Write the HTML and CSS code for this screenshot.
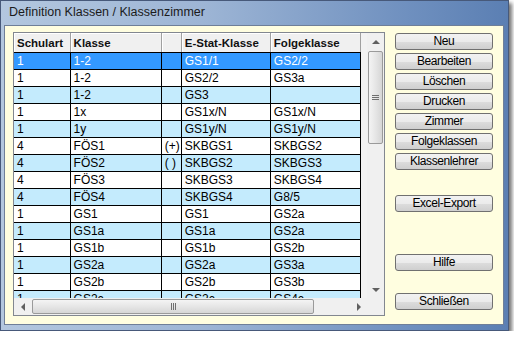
FILE: index.html
```html
<!DOCTYPE html>
<html lang="de">
<head>
  <meta charset="UTF-8" />
  <title>Definition Klassen / Klassenzimmer</title>
  <link rel="stylesheet" href="styles.css">
</head>
<body>
  <div class="window">
    <div class="titlebar">Definition Klassen / Klassenzimmer</div>
    <div class="client">

      <!-- Klassen grid -->
      <div class="grid">
        <div class="grid-body">
          <div class="table-wrap">
            <table class="classes">
              <colgroup>
                <col class="c-art"><col class="c-klasse"><col class="c-flag"><col class="c-estat"><col class="c-folge">
              </colgroup>
              <thead>
                <tr><th>Schulart</th><th>Klasse</th><th></th><th>E-Stat-Klasse</th><th>Folgeklasse</th></tr>
              </thead>
              <tbody>
                <tr class="selected"><td>1</td><td>1-2</td><td></td><td>GS1/1</td><td>GS2/2</td></tr>
                <tr><td>1</td><td>1-2</td><td></td><td>GS2/2</td><td>GS3a</td></tr>
                <tr class="alt"><td>1</td><td>1-2</td><td></td><td>GS3</td><td></td></tr>
                <tr><td>1</td><td>1x</td><td></td><td>GS1x/N</td><td>GS1x/N</td></tr>
                <tr class="alt"><td>1</td><td>1y</td><td></td><td>GS1y/N</td><td>GS1y/N</td></tr>
                <tr><td>4</td><td>FÖS1</td><td>(+)</td><td>SKBGS1</td><td>SKBGS2</td></tr>
                <tr class="alt"><td>4</td><td>FÖS2</td><td>( )</td><td>SKBGS2</td><td>SKBGS3</td></tr>
                <tr><td>4</td><td>FÖS3</td><td></td><td>SKBGS3</td><td>SKBGS4</td></tr>
                <tr class="alt"><td>4</td><td>FÖS4</td><td></td><td>SKBGS4</td><td>G8/5</td></tr>
                <tr><td>1</td><td>GS1</td><td></td><td>GS1</td><td>GS2a</td></tr>
                <tr class="alt"><td>1</td><td>GS1a</td><td></td><td>GS1a</td><td>GS2a</td></tr>
                <tr><td>1</td><td>GS1b</td><td></td><td>GS1b</td><td>GS2b</td></tr>
                <tr class="alt"><td>1</td><td>GS2a</td><td></td><td>GS2a</td><td>GS3a</td></tr>
                <tr><td>1</td><td>GS2b</td><td></td><td>GS2b</td><td>GS3b</td></tr>
                <tr class="alt"><td>1</td><td>GS2c</td><td></td><td>GS2c</td><td>GS4c</td></tr>
              </tbody>
            </table>
          </div>
          <div class="vscroll">
            <div class="arrow-btn"><span class="tri tri-up"></span></div>
            <div class="vthumb"><span class="grip-h"></span></div>
            <div class="vtrack"></div>
            <div class="arrow-btn"><span class="tri tri-down"></span></div>
          </div>
        </div>
        <div class="hscroll-row">
          <div class="hscroll">
            <div class="arrow-btn"><span class="tri tri-left"></span></div>
            <div class="hthumb"><span class="grip-v"></span></div>
            <div class="htrack"></div>
            <div class="arrow-btn"><span class="tri tri-right"></span></div>
          </div>
          <div class="corner"></div>
        </div>
      </div>

      <!-- Buttons -->
      <div class="buttons">
        <button>Neu</button>
        <button>Bearbeiten</button>
        <button>Löschen</button>
        <button>Drucken</button>
        <button>Zimmer</button>
        <button>Folgeklassen</button>
        <button>Klassenlehrer</button>
        <button class="btn-export">Excel-Export</button>
        <button class="btn-help">Hilfe</button>
        <button class="btn-close">Schließen</button>
      </div>
    </div>
  </div>
</body>
</html>
```

FILE: styles.css
```css
body {
  margin: 0;
  background: #fff;
  font-family: "Liberation Sans", Arial, sans-serif;
}
.window {
  width: 509px;
  height: 331px;
  box-sizing: border-box;
  padding: 0 4px 5px 3px;
  background: linear-gradient(to right, #b3c7df 0%, #9db5d5 40%, #6f90bf 80%, #5b7fb3 100%);
  border: 1px solid #47597a;
  box-shadow: 3px 3px 4px rgba(0, 0, 0, 0.55);
  display: flex;
  flex-direction: column;
}
.titlebar {
  height: 24px;
  line-height: 22px;
  padding-left: 5px;
  font-size: 12.5px;
  color: #1b1b1b;
}
.client {
  flex: 1;
  display: flex;
  background: #fffee0;
  border: 1px solid #6f7f98;
  padding: 6px 0 0 8px;
}
/* grid */
.grid {
  width: 370px;
  height: 282px;
  border: 1px solid #828790;
  background: #f2f2f2;
  display: flex;
  flex-direction: column;
}
.grid-body {
  flex: 1;
  display: flex;
  overflow: hidden;
}
.table-wrap {
  width: 354px;
  overflow: hidden;
}
.classes {
  border-collapse: collapse;
  table-layout: fixed;
  width: 347px;
  font-size: 12px;
}
.c-art { width: 56px; }
.c-klasse { width: 91px; }
.c-flag { width: 20px; }
.c-estat { width: 89px; }
.c-folge { width: 90px; }
.classes th {
  height: 19px;
  padding: 0 3px;
  text-align: left;
  font-size: 11.5px;
  font-weight: bold;
  color: #111;
  background: #f0f0f0;
  border-right: 1px solid #a0a0a0;
  border-bottom: 1px solid #000;
  box-shadow: inset 1px 1px 0 #fff;
  white-space: nowrap;
}
.classes td {
  height: 16px;
  padding: 0 3px;
  line-height: 16px;
  border: 1px solid #000;
  background: #fff;
  color: #000;
  white-space: nowrap;
  overflow: hidden;
}
.classes tr td:first-child {
  border-left: none;
}
.classes tr.alt td {
  background: #c4ebfd;
}
.classes tr.selected td {
  background: #3399ff;
  color: #fff;
}
/* scrollbars */
.vscroll {
  width: 17px;
  margin-left: auto;
  display: flex;
  flex-direction: column;
  background: #f0f0f0;
}
.arrow-btn {
  width: 17px;
  height: 17px;
  display: flex;
  align-items: center;
  justify-content: center;
  flex: none;
}
.tri {
  width: 0;
  height: 0;
  border: 4px solid transparent;
}
.tri-up { border-bottom-color: #606060; border-top-width: 0; }
.tri-down { border-top-color: #606060; border-bottom-width: 0; }
.tri-left { border-right-color: #606060; border-left-width: 0; }
.tri-right { border-left-color: #606060; border-right-width: 0; }
.vthumb {
  height: 93px;
  margin: 1px 1px 0 1px;
  box-sizing: border-box;
  border: 1px solid #9a9a9a;
  border-radius: 2px;
  background: linear-gradient(to right, #f4f4f4, #e6e6e6 50%, #d6d6d6);
  display: flex;
  align-items: center;
  justify-content: center;
}
.vtrack { flex: 1; }
.grip-h {
  width: 7px;
  height: 5px;
  background: repeating-linear-gradient(to bottom, #707070 0 1px, transparent 1px 2px);
}
.hscroll-row {
  height: 17px;
  display: flex;
}
.hscroll {
  flex: 1;
  display: flex;
  background: #f0f0f0;
}
.hthumb {
  width: 282px;
  margin: 1px 0 1px 1px;
  box-sizing: border-box;
  border: 1px solid #9a9a9a;
  border-radius: 2px;
  background: linear-gradient(to bottom, #f4f4f4, #e6e6e6 50%, #d6d6d6);
  display: flex;
  align-items: center;
  justify-content: center;
}
.htrack { flex: 1; }
.grip-v {
  width: 5px;
  height: 7px;
  background: repeating-linear-gradient(to right, #707070 0 1px, transparent 1px 2px);
}
.corner {
  width: 17px;
  background: #f0f0f0;
}
/* buttons */
.buttons {
  width: 98px;
  margin-left: 10px;
  padding-top: 1px;
  display: flex;
  flex-direction: column;
  gap: 3px;
}
button {
  height: 17px;
  flex: none;
  padding: 0;
  border: 1px solid #707070;
  border-radius: 3px;
  background: linear-gradient(to bottom, #f2f2f2 0%, #ebebeb 50%, #dddddd 51%, #cfcfcf 100%);
  font-family: "Liberation Sans", Arial, sans-serif;
  font-size: 12px;
  font-weight: normal;
  letter-spacing: -0.4px;
  color: #000;
  line-height: 15px;
}
.btn-export { margin-top: 22px; }
.btn-help { margin-top: 39px; }
.btn-close { margin-top: 19px; }
```
